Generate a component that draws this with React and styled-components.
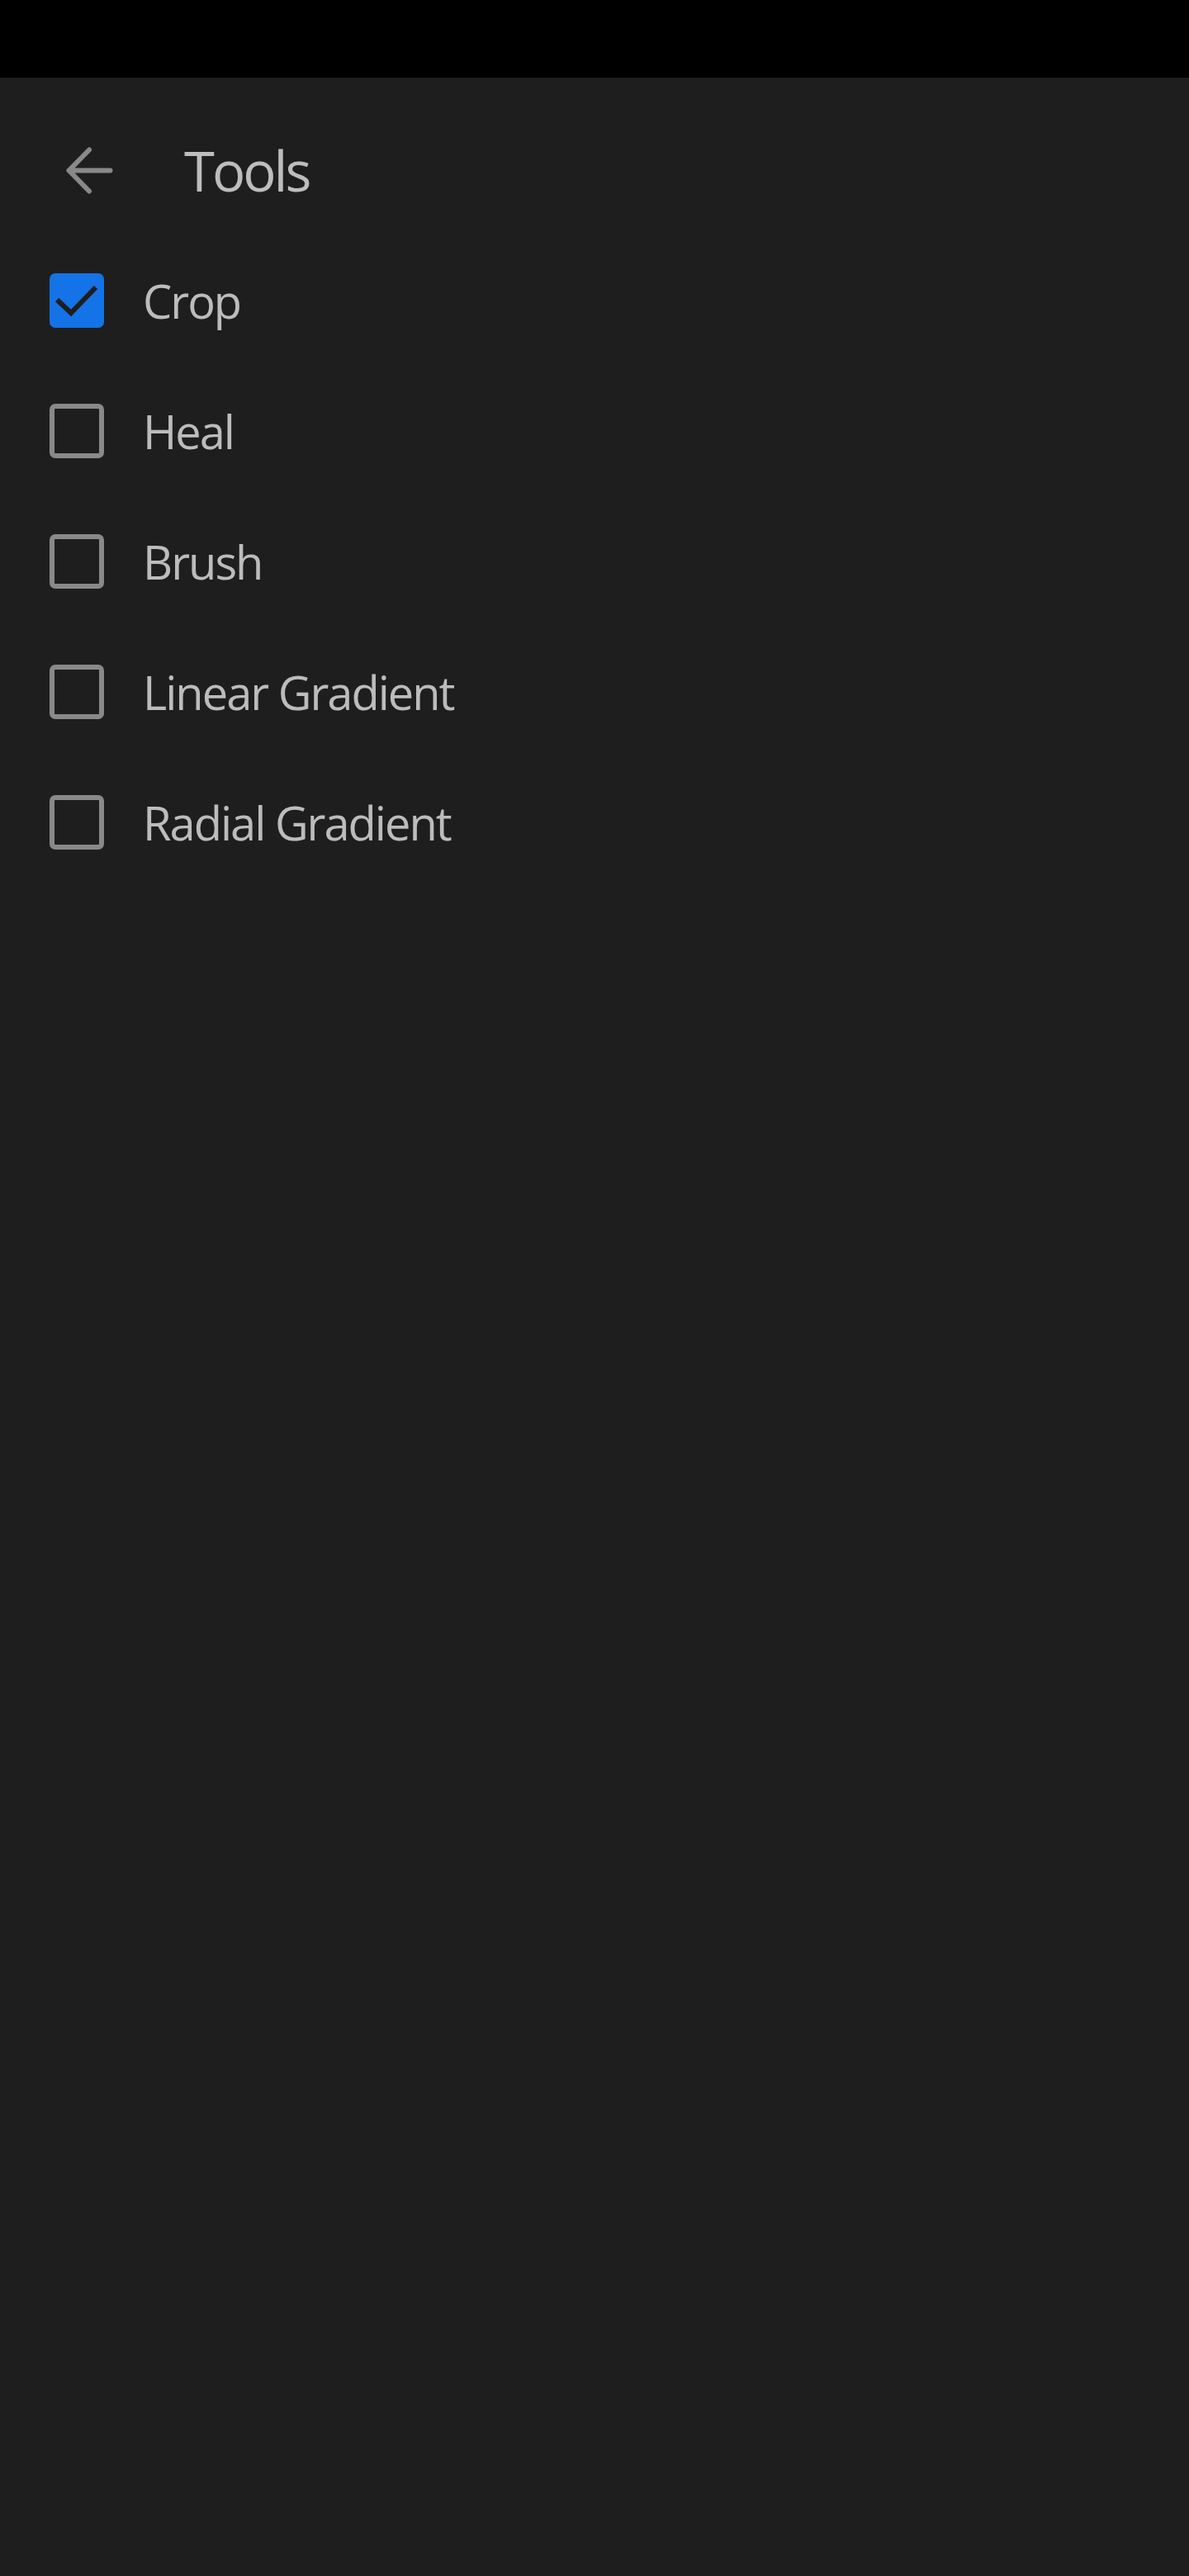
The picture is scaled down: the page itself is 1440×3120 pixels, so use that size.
import React from "react";
import styled, { createGlobalStyle } from "styled-components";

const GlobalStyle = createGlobalStyle`
    html, body {
        margin: 0;
        padding: 0;
        background: #1e1e1e;
    }
    * {
        box-sizing: border-box;
    }
`

const Screen = styled.div`
    min-height: 3120px;
    background: #1e1e1e;
    font-family: "Open Sans", "Noto Sans", sans-serif;
    color: #bcbcbc;
`

const StatusBar = styled.div`
    height: 94px;
    background: #000;
`

const Header = styled.div`
    height: 191px;
    padding: 33px 0 0 80px;
    display: flex;
    align-items: center;
`

const BackButton = styled.button`
    width: 57px;
    height: 57px;
    padding: 0;
    border: none;
    background: none;
    display: flex;
    cursor: pointer;
`

const Title = styled.h1`
    margin: 0 0 0 86px;
    font-size: 67px;
    font-weight: 500;
    line-height: 1;
    letter-spacing: -3px;
    color: #bdbdbd;
`

const List = styled.div`
    display: flex;
    flex-direction: column;
`

const Row = styled.label`
    height: 158px;
    padding-left: 60px;
    display: flex;
    align-items: center;
    gap: 47px;
    cursor: pointer;
`

const Box = styled.span`
    width: 66px;
    height: 66px;
    flex: none;
    border-radius: 7px;
    display: flex;
    border: ${(p) => (p.$checked ? "none" : "6px solid #898989")};
    background: ${(p) => (p.$checked ? "#1473e6" : "transparent")};
`

const Label = styled.span`
    font-size: 56px;
    font-weight: 500;
    line-height: 1;
    letter-spacing: -2px;
    color: #bcbcbc;
`

const tools = [
    { name: "Crop", checked: true },
    { name: "Heal", checked: false },
    { name: "Brush", checked: false },
    { name: "Linear Gradient", checked: false },
    { name: "Radial Gradient", checked: false },
]

function BackArrow() {
    return (
        <svg width="57" height="57" viewBox="0 0 57 57" fill="none">
            <path
                d="M3.5 28.5 H53.5 M3.5 28.5 L28 3.5 M3.5 28.5 L28 53.5"
                stroke="#898989"
                strokeWidth="6"
                strokeLinecap="round"
                strokeLinejoin="round"
            />
        </svg>
    )
}

function Check() {
    return (
        <svg width="66" height="66" viewBox="0 0 66 66" fill="none">
            <path
                d="M9 32 L26 48 L56 17"
                stroke="#1e1e1e"
                strokeWidth="6"
            />
        </svg>
    )
}

function App() {
    return (
        <Screen>
            <GlobalStyle />
            <StatusBar />
            <Header>
                <BackButton aria-label="Back">
                    <BackArrow />
                </BackButton>
                <Title>Tools</Title>
            </Header>
            <List>
                {tools.map((tool) => (
                    <Row key={tool.name}>
                        <Box $checked={tool.checked}>
                            {tool.checked && <Check />}
                        </Box>
                        <Label>{tool.name}</Label>
                    </Row>
                ))}
            </List>
        </Screen>
    )
}

export default App
